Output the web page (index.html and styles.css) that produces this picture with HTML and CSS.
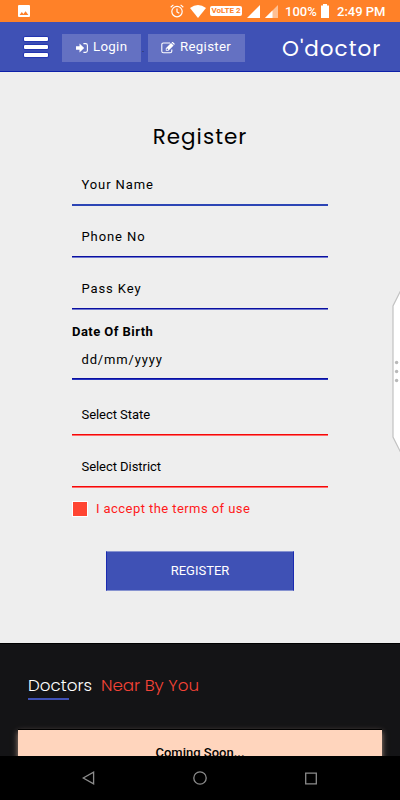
FILE: index.html
```html
<!DOCTYPE html>
<html lang="en">
<head>
<meta charset="utf-8">
<title>O'doctor</title>
<link rel="stylesheet" href="styles.css">
</head>
<body>
<div class="statusbar">
  <svg class="s-photo" width="12" height="12" viewBox="0 0 12 12"><path fill="#fff" fill-rule="evenodd" d="M1 0h10a1 1 0 0 1 1 1v10a1 1 0 0 1-1 1H1a1 1 0 0 1-1-1V1a1 1 0 0 1 1-1zM1.6 10h8.8L7.6 6.2 5.4 9 3.8 7z"/></svg>
  <svg class="s-alarm" width="14" height="14" viewBox="0 0 14 14" fill="none" stroke="#fff" stroke-width="1.2"><circle cx="7" cy="7.6" r="5.2"/><path d="M7 4.5v3.4l2.3 1.4M.7 3.2 3.4.9M13.3 3.2 10.6.9"/></svg>
  <svg class="s-wifi" width="16" height="13" viewBox="0 0 16 13"><path fill="#fff" d="M0 3Q8-3 16 3L8 13z"/></svg>
  <span class="volte">VoLTE 2</span>
  <svg class="s-sig" width="13" height="13" viewBox="0 0 13 13"><path fill="#fff" d="M13 0v13H0z"/></svg>
  <svg class="s-sig2" width="13" height="13" viewBox="0 0 13 13"><path fill="#ffc093" d="M13 0v13H0z"/><path fill="#fff" d="M7.5 5.5V13H0z"/></svg>
  <span class="percent">100%</span>
  <svg class="s-bat" width="8" height="14" viewBox="0 0 8 14"><path fill="#fff" d="M2 0h4v1.5h2V14H0V1.5h2z"/></svg>
  <span class="clock">2:49 PM</span>
</div>
<header class="header">
  <div class="burger"><i></i><i></i><i></i></div>
  <a class="pill login">
    <svg width="12" height="10" viewBox="0 0 12 10"><path fill="#fff" d="M0 3.2h3.5V.4L8.2 5 3.5 9.6V6.8H0z"/><path fill="none" stroke="#fff" stroke-width="1.1" d="M7.4.6h2.2q1.8 0 1.8 1.8v5.2q0 1.8-1.8 1.8H7.4"/></svg>
    <span>Login</span>
  </a>
  <span class="dot">.</span>
  <a class="pill signup">
    <svg width="14" height="12" viewBox="0 0 14 12"><path fill="none" stroke="#fff" stroke-width="1.1" d="M9 1H2.4Q.8 1 .8 2.6v6.6q0 1.6 1.6 1.6h6.8q1.6 0 1.6-1.6V7.4"/><path fill="#fff" fill-rule="evenodd" d="M4.8 8.8V6.2L10 1l2.6 2.6-5.2 5.2zM5.6 6.7v1.3h1.2l.5-.5-1.2-1.3zM10.6.5l.5-.4q.5-.3 1 .1l1.4 1.4q.4.5 0 1l-.4.5z"/></svg>
    <span>Register</span>
  </a>
  <div class="brand">O'doctor</div>
</header>
<main class="main">
  <h1 class="title">Register</h1>
  <form class="form">
    <div class="field name">Your Name</div>
    <div class="field phone">Phone No</div>
    <div class="field pass">Pass Key</div>
    <label class="label">Date Of Birth</label>
    <div class="field date">dd/mm/yyyy</div>
    <div class="field select">Select State</div>
    <div class="field select district">Select District</div>
    <div class="terms"><span class="check"></span><span>I accept the terms of use</span></div>
    <div class="submit">REGISTER</div>
  </form>
</main>
<section class="doctors">
  <h2 class="heading"><span class="white">Doctors</span><span class="red">Near By You</span></h2>
  <div class="card">Coming Soon...</div>
</section>
<nav class="navbar">
  <svg width="13" height="14" viewBox="0 0 13 14" fill="none" stroke="#8c8c8c" stroke-width="1.3"><path d="M11.6 1.2v11.6L1.2 7z"/></svg>
  <svg width="14" height="14" viewBox="0 0 14 14" fill="none" stroke="#8c8c8c" stroke-width="1.3"><circle cx="7" cy="7" r="6.2"/></svg>
  <svg width="12" height="13" viewBox="0 0 12 13" fill="none" stroke="#8c8c8c" stroke-width="1.3"><path d="M.7 1.2h10.6v10.6H.7z"/></svg>
</nav>
<svg class="edge" width="8" height="162" viewBox="0 0 8 162"><path fill="#fff" stroke="#c2c2c2" stroke-width="1.2" d="M9-1 1 15v131l8 16"/><g fill="#b9b9b9"><circle cx="4.6" cy="71.5" r="1.7"/><circle cx="4.6" cy="80.5" r="1.7"/><circle cx="4.6" cy="89.5" r="1.7"/></g></svg>
</body>
</html>
```
FILE: styles.css
```css
* { box-sizing: border-box; }
body {
  margin: 0;
  width: 400px;
  height: 800px;
  overflow: hidden;
  position: relative;
  display: flex;
  flex-direction: column;
  background: #eee;
  color: #000;
  font-family: Roboto, sans-serif;
  font-size: 13px;
}
svg { display: block; flex: none; }
.statusbar {
  height: 22px;
  flex: none;
  display: flex;
  align-items: center;
  padding-left: 18px;
  background: #ff8128;
  color: #fff;
  white-space: nowrap;
}
.s-alarm { margin-left: 140px; }
.s-wifi { margin-left: 6px; }
.volte {
  margin-left: 4px;
  width: 32px;
  height: 10px;
  border-radius: 2px;
  background: #fff;
  color: #ff8128;
  font-size: 8px;
  font-weight: 700;
  line-height: 10px;
  text-align: center;
}
.s-sig { margin-left: 5px; }
.s-sig2 { margin-left: 5px; }
.percent { margin-left: 7px; width: 33px; font-weight: 500; }
.s-bat { margin-left: 3px; }
.clock { margin-left: 8px; font-weight: 500; }
.header {
  height: 50px;
  flex: none;
  display: flex;
  align-items: center;
  padding-left: 24px;
  background: #3f51b5;
  border-bottom: 1px solid #0d1fa8;
  color: #fff;
}
.burger { width: 24px; display: grid; gap: 4px; }
.burger i {
  height: 4px;
  background: #fff;
  border-radius: 1px;
  box-shadow: 0 0 1px 0.5px #0a1cae;
}
.pill {
  height: 28px;
  margin-top: 2px;
  display: flex;
  align-items: center;
  background: #6471c2;
  font-size: 13.3px;
  letter-spacing: 0.3px;
}
.pill span { margin-top: -2px; }
.login { width: 79px; margin-left: 14px; padding-left: 14px; gap: 5px; }
.dot { width: 7px; padding-left: 1px; color: #222; font-size: 9px; margin-top: 4px; }
.signup { width: 97px; padding-left: 13px; gap: 5px; }
.brand {
  margin: 3px 0 0 37px;
  font-family: Poppins, sans-serif;
  font-size: 21.5px;
  letter-spacing: 1px;
}
.main { height: 571px; flex: none; padding-top: 47px; }
.title {
  margin: 0;
  height: 36px;
  line-height: 36px;
  text-align: center;
  font-family: Poppins, sans-serif;
  font-size: 21.5px;
  font-weight: 400;
  letter-spacing: 1px;
}
.form { width: 256px; margin: 11px auto 0; }
.field {
  height: 40px;
  padding-left: 9.5px;
  line-height: 38px;
  border-bottom: 1px solid #6f78cf;
  box-shadow: inset 0 -1px #0a0fa0;
  letter-spacing: 0.9px;
}
.name { border-color: #2c45b5; box-shadow: inset 0 -1px #2c45b5; }
.field + .field { margin-top: 12px; }
.label {
  display: block;
  height: 20px;
  margin-top: 11px;
  line-height: 22px;
  font-weight: 700;
  letter-spacing: 0.45px;
}
.field.date { height: 39px; letter-spacing: 0.85px; border-color: #2634c0; line-height: 38px; }
.field.select { border-color: #ff6b6b; box-shadow: inset 0 -1px #f40808; letter-spacing: -0.05px; }
.field.date + .field { margin-top: 16px; }
.terms {
  height: 15px;
  margin-top: 13px;
  padding-left: 1px;
  display: flex;
  align-items: center;
  gap: 9px;
  color: #ff1a1a;
  letter-spacing: 0.43px;
}
.check {
  width: 14px;
  height: 14px;
  background: #ff4532;
  outline: 1px solid #fff;
}
.submit {
  width: 188px;
  height: 40px;
  margin: 35px auto 0;
  background: #3f51b5;
  border: 1px solid #1a2ab0;
  border-top-color: #8793d0;
  border-bottom-color: #8793d0;
  color: #fff;
  line-height: 37px;
  text-align: center;
}
.doctors {
  height: 113px;
  flex: none;
  overflow: hidden;
  padding: 27px 18px 0;
  background: #141416;
  border-top: 1px solid #000;
}
.heading {
  margin: 0;
  padding-left: 10px;
  height: 58px;
  display: flex;
  gap: 9px;
  line-height: 29px;
  font-family: Poppins, sans-serif;
  font-size: 16.7px;
  font-weight: 300;
}
.white { color: #fff; }
.white::after { content: ""; display: block; width: 41px; height: 2px; margin-top: -2px; background: #3f51b5; }
.red { color: #f44336; }
.card {
  height: 70px;
  padding-top: 15px;
  background: #ffd5bd;
  border: 1px solid #000;
  border-width: 1px 0 0;
  box-shadow: 0 3px 6px #a58b7d;
  text-align: center;
  font-weight: 500;
}
.navbar {
  height: 44px;
  flex: none;
  display: flex;
  align-items: center;
  gap: 98px;
  padding-left: 82px;
  background: #000;
  position: relative;
}
.edge { position: absolute; left: 392px; top: 291px; }
```
